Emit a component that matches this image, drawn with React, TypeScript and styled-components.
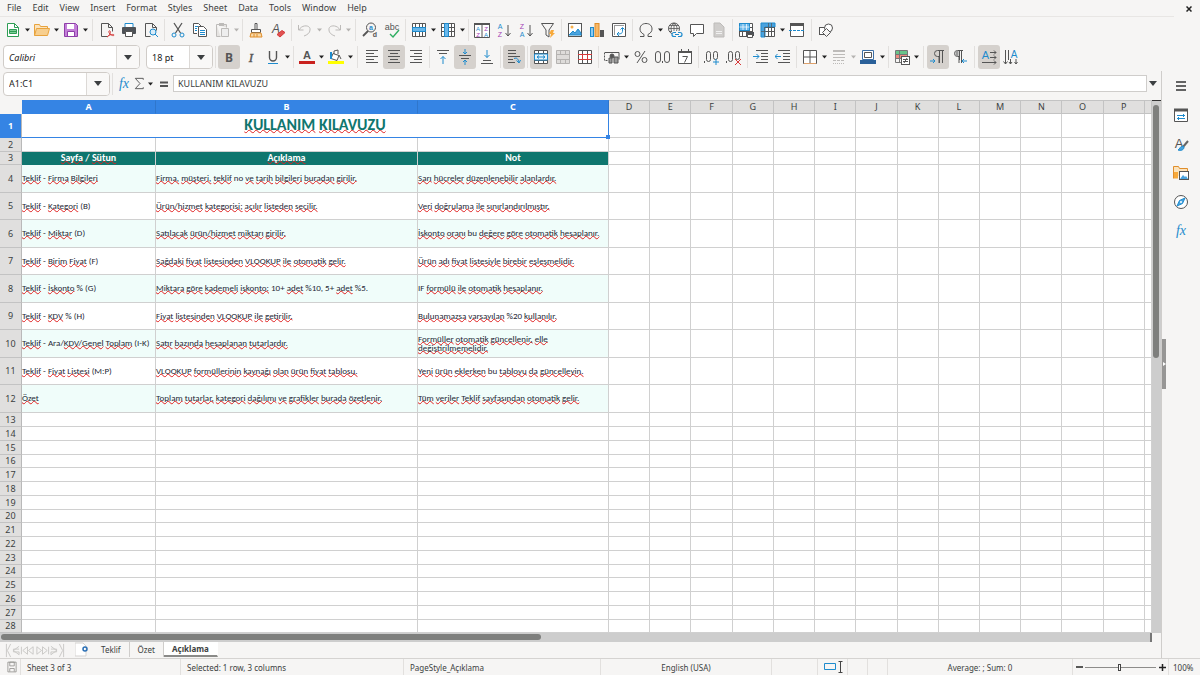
import React from "react";
import styled, { createGlobalStyle, css } from "styled-components";

const ui = `"Noto Sans", "Open Sans", sans-serif`;
const cellFont = `Carlito, Lato, "Noto Sans", sans-serif`;

const c = {
  bg: "#f6f5f4",
  ink: "#3c3f41",
  icon: "#555555",
  dim: "#bdbbb9",
  blue: "#1e8bcd",
  accent: "#3584e4",
  red: "#d63a3a",
  teal: "#0f766e",
  mint: "#f0fdfa",
  grid: "#d0d0d0",
  head: "#e0dfde",
};

const Global = createGlobalStyle`
  * { box-sizing: border-box; }
  body { margin: 0; background: ${c.bg}; color: ${c.ink}; font-family: ${ui}; font-size: 9px; }
  button, input { font: inherit; color: inherit; margin: 0; padding: 0; border: 0; background: none; }
  input:focus, button:focus { outline: none; }
`;

const Page = styled.div`
  min-height: 100vh;
  display: flex;
  flex-direction: column;
`;

const MenuBar = styled.nav`
  display: flex;
  align-items: center;
  height: 17px;
  padding: 0 6px 0 0;
`;
const MenuItems = styled.div`
  display: flex;
  flex: 1;
  height: 17px;
  margin-right: 10px;
  padding-left: 2px;
  border-bottom: 1px solid #e8e6e4;
`;
const MenuItem = styled.button`
  padding: 0 6px 0 5px;
  line-height: 16px;
`;
const CloseButton = styled.button`
  width: 10px;
  height: 16px;
  display: grid;
  place-items: center;
`;

const Toolbar = styled.div`
  display: flex;
  align-items: center;
  height: 27px;
  padding: 0 0 1px 2px;
`;
const Divider = styled.span<{ $wide?: boolean }>`
  width: ${(p) => (p.$wide ? 7 : 5)}px;
  height: 22px;
  flex: none;
  background: linear-gradient(#e2e0de, #e2e0de) center / 1px 100% no-repeat;
`;
const ToolButton = styled.button<{ $on?: boolean }>`
  width: 22px;
  height: 24px;
  flex: none;
  display: grid;
  place-items: center;
  border-radius: 3px;
  ${(p) => p.$on && css`background: #d5d1cd;`}
`;
const CaretButton = styled.button<{ $off?: boolean }>`
  width: 7px;
  height: 24px;
  flex: none;
  display: grid;
  place-items: center;
  color: ${(p) => (p.$off ? "#b5b3b1" : "#222")};
`;

const Combo = styled.label<{ $w: number }>`
  display: flex;
  flex: none;
  width: ${(p) => p.$w}px;
  height: 24px;
  margin-left: 1px;
  background: #fff;
  border: 1px solid #d0ccc8;
  border-radius: 4px;
  overflow: hidden;
`;
const ComboInput = styled.input<{ $italic?: boolean }>`
  flex: 1;
  min-width: 0;
  padding-left: 5px;
  color: #222;
  font-style: ${(p) => (p.$italic ? "italic" : "normal")};
`;
const ComboArrow = styled.button`
  width: 23px;
  display: grid;
  place-items: center;
  background: #f9f8f7;
  border-left: 1px solid #dcd9d6;
`;
const Gap = styled.span`
  width: 5px;
  flex: none;
`;

const Body = styled.div`
  display: flex;
  flex: 1;
`;
const Main = styled.main`
  flex: 1;
  min-width: 0;
  display: flex;
  flex-direction: column;
  border-right: 1px solid #cfcdcb;
`;
const FormulaBar = styled.div`
  display: flex;
  align-items: center;
  height: 29px;
  padding: 0 2px 4px;
`;
const FormulaTool = styled.button<{ $w: number }>`
  width: ${(p) => p.$w}px;
  height: 22px;
  flex: none;
  display: grid;
  place-items: center;
`;
const FormulaInput = styled.input`
  flex: 1;
  min-width: 0;
  height: 17px;
  padding-left: 4px;
  background: #fff;
  border: 1px solid #cfcdcb;
`;

const GridArea = styled.div`
  display: flex;
`;
const Sheet = styled.table`
  flex: 1;
  width: 100%;
  min-width: 0;
  table-layout: fixed;
  border-collapse: separate;
  border-spacing: 0;
  background: #fff;
`;
const Col = styled.col<{ $w?: number }>`
  ${(p) => p.$w && css`width: ${p.$w}px;`}
`;
const Corner = styled.th`
  height: 14px;
  padding: 0;
  background: ${c.bg};
`;
const ColHead = styled.th<{ $on?: boolean }>`
  height: 14px;
  padding: 0;
  line-height: 12px;
  font-size: 9px;
  font-weight: ${(p) => (p.$on ? 700 : 400)};
  color: ${(p) => (p.$on ? "#fff" : "#3c3f41")};
  background: ${(p) => (p.$on ? c.accent : c.head)};
  border-right: 1px solid ${(p) => (p.$on ? "#2f76cc" : "#c3c3c3")};
  border-bottom: 1px solid ${(p) => (p.$on ? c.accent : "#c3c3c3")};
  border-top: 1px solid ${(p) => (p.$on ? c.accent : "#c3c3c3")};
`;
const RowHead = styled.th<{ $h: number; $on?: boolean }>`
  height: ${(p) => p.$h}px;
  padding: 0;
  line-height: 12px;
  font-size: 9px;
  font-weight: ${(p) => (p.$on ? 700 : 400)};
  color: ${(p) => (p.$on ? "#fff" : "#3c3f41")};
  background: ${(p) => (p.$on ? c.accent : c.head)};
  border-right: 1px solid #b9b9b9;
  border-bottom: 1px solid ${(p) => (p.$on ? c.accent : "#c3c3c3")};
`;
const Cell = styled.td<{ $mint?: boolean }>`
  padding: 0 0 2px;
  border-right: 1px solid ${c.grid};
  border-bottom: 1px solid ${c.grid};
  background: ${(p) => (p.$mint ? c.mint : "#fff")};
  font-family: ${cellFont};
  font-size: 9px;
  line-height: 9px;
  color: #1f2937;
  white-space: nowrap;
`;
const TitleCell = styled.td`
  position: relative;
  padding: 0 0 2px;
  text-align: center;
  font-family: ${cellFont};
  font-size: 16px;
  line-height: 20px;
  font-weight: 700;
  color: ${c.teal};
  border-right: 1px solid ${c.accent};
  border-bottom: 1px solid ${c.accent};
`;
const FillHandle = styled.span`
  position: absolute;
  right: -2px;
  bottom: -2px;
  width: 4px;
  height: 4px;
  background: ${c.accent};
`;
const BandCell = styled.td`
  padding: 0 0 1px;
  text-align: center;
  background: ${c.teal};
  color: #fff;
  font-size: 10px;
  line-height: 12px;
  font-weight: 700;
  font-family: ${cellFont};
  border-right: 1px solid ${c.grid};
`;
const Misspelt = styled.span`
  text-decoration: underline wavy #e02020 1px;
  text-decoration-skip-ink: none;
  text-underline-offset: -1px;
`;

const VScroll = styled.div`
  width: 9px;
  flex: none;
  padding: 4px 2px 0 1px;
  background: #cdcdcd;
  border-top: 1px solid #333;
`;
const VThumb = styled.div`
  height: 48%;
  border-radius: 3px;
  background: #7e7f7d;
`;
const HScroll = styled.div`
  height: 9px;
  margin-right: 9px;
  padding: 1px;
  background: #cdcdcd;
  border-right: 2px solid #777;
`;
const HThumb = styled.div`
  width: 47%;
  height: 6px;
  border-radius: 3px;
  background: #7e7f7d;
`;
const Handle = styled.button`
  position: absolute;
  left: 0;
  top: 268px;
  width: 4px;
  height: 50px;
  background: #979695;
  display: grid;
  place-items: center;
`;

const TabBar = styled.div`
  display: flex;
  height: 16px;
  font-size: 8px;
`;
const TabNav = styled.div`
  display: flex;
  align-items: center;
  width: 75px;
  padding-left: 5px;
`;
const NavButton = styled.button`
  width: 15px;
  height: 14px;
  display: grid;
  place-items: center;
`;
const AddSheet = styled.button`
  width: 18px;
  height: 15px;
  display: grid;
  place-items: center start;
`;
const Tab = styled.button<{ $on?: boolean }>`
  height: 15px;
  padding: 0 8px;
  line-height: 14px;
  border-right: 1px solid ${(p) => (p.$on ? "transparent" : "#cfcdcb")};
  ${(p) =>
    p.$on &&
    css`
      font-weight: 700;
      background: #fff;
      border-bottom: 2px solid #8a8a88;
    `}
`;

const Sidebar = styled.aside`
  position: relative;
  width: 38px;
  flex: none;
  display: flex;
  flex-direction: column;
  align-items: center;
`;
const DeckButton = styled.button`
  width: 29px;
  height: 29px;
  display: grid;
  place-items: center;
`;

const StatusBar = styled.footer`
  display: grid;
  grid-template-columns: 21px 160fr 223fr 197fr 171fr 46px 30px 20px 20px 185fr 96px 31px;
  height: 17px;
  border-top: 1px solid #d5d3d1;
  font-size: 8px;
`;
const Status = styled.div<{ $mid?: boolean }>`
  display: flex;
  align-items: center;
  justify-content: ${(p) => (p.$mid ? "center" : "flex-start")};
  padding-left: ${(p) => (p.$mid ? 0 : 6)}px;
  border-right: 1px solid #e2e0de;
  white-space: nowrap;
  &:last-child { border-right: 0; padding-left: 4px; }
`;
const ZoomButton = styled.button`
  width: 12px;
  height: 14px;
  display: grid;
  place-items: center;
`;
const ZoomSlider = styled.input`
  appearance: none;
  flex: 1;
  min-width: 0;
  height: 9px;
  background: linear-gradient(#8d8c8a, #8d8c8a) center / 100% 1px no-repeat;
  &::-webkit-slider-thumb {
    appearance: none;
    width: 3px;
    height: 7px;
    border: 1px solid #444;
    background: #fff;
  }
`;

const A = ({ x, y, s = 7, f = c.icon, w = 400, i, font = `"Liberation Sans", sans-serif`, children }: any) => (
  <text x={x} y={y} fontSize={s} fill={f} stroke="none" fontWeight={w} fontStyle={i ? "italic" : "normal"} textAnchor="middle" fontFamily={font}>
    {children}
  </text>
);
const sheetGrid = "M1.500 1.500h13v13h-13zM1.500 5.500h13M1.500 9.500h13M4.500 1.500v13M8.500 1.500v13M11.500 1.500v13";
const lines = (a: number[][]) => a.map(([x, y, w]) => `M${x} ${y}.5h${w}`).join("");

const icons: Record<string, React.ReactNode> = {
  new: <><path d="M2.500 1.500h7l4 4v9h-11z" fill="#fff" stroke="#2f9e55" /><path d="M9.500 1.500v4h4" stroke="#2f9e55" /><path d="M4.500 7.500h7v4h-7zM4.500 9.500h7" stroke="#2f9e55" fill="#7fd19a" /></>,
  open: <><path d="M.500 13.500v-11h5l1 2h7v2" fill="#fbe3bd" stroke="#e8a33d" /><path d="M.500 13.500l2-7h13l-2 7z" fill="#f7cf8f" stroke="#e8a33d" /></>,
  save: <><path d="M1.500 1.500h11l2 2v11h-13z" fill="#c37fd8" stroke="#8e3ea8" /><path d="M4 2h7v5H4z" fill="#fff" stroke="none" /><path d="M4.500 14v-4.500h7V14" fill="#fff" stroke="#8e3ea8" /></>,
  pdf: <><path d="M8.500 14.500h-6v-13h7l4 4v4M9.500 1.500v4h4" /><path d="M8 15c3-2 4-5 3-6s-2 1 0 3 4 2 4 1-4-1-7 2z" stroke={c.red} /></>,
  print: <><path d="M4 1.500h8v4H4z" fill="#fff" stroke={c.blue} /><rect x="1" y="5" width="14" height="7" rx="1" fill="#4d5156" stroke="none" /><path d="M4.500 9.500h7v5h-7z" fill="#fff" /></>,
  preview: <><path d="M7.500 14.500h-5v-13h7l4 4v3M9.500 1.500v4h4" /><circle cx="10" cy="10" r="3" stroke={c.blue} fill="#d7ecf9" /><path d="M12 12l3 3" stroke={c.blue} /></>,
  cut: <><path d="M4 1l6.500 10M12 1L5.500 11" strokeWidth="1.300" /><circle cx="4" cy="13" r="2" stroke={c.blue} /><circle cx="12" cy="13" r="2" stroke={c.blue} /></>,
  copy: <><path d="M5 11.500H1.500v-10h5l3 3" fill="#fff" /><path d="M3 4.500h3M3 6.500h2M3 8.500h2" stroke={c.blue} /><path d="M6.500 4.500h5l3 3v7h-8z" fill="#fff" /><path d="M8 8.500h5M8 10.500h5M8 12.500h5" stroke={c.blue} /></>,
  paste: <><path d="M2.500 2.500h10v3M2.500 2.500v12h4" stroke={c.dim} fill="#e5e3e1" /><path d="M5 1h5v3H5z" fill={c.dim} stroke="none" /><path d="M7.500 6.500h7v8h-7z" fill="#eee" stroke={c.dim} /></>,
  clone: <><path d="M7 1.500h2v6H7z" fill="#fff" /><path d="M3.500 7.500h9v3h-9z" fill="#fff" /><path d="M3 11h10l1 4H2z" fill="#f9d9a8" stroke="#e08e2b" /><path d="M6 12v3M9 12v3" stroke="#e08e2b" /></>,
  clear: <><A x={6} y={11} s={12} i>A</A><path d="M7 12.500l5-4 3 2-5 4.500z" fill="#e05252" stroke={c.red} /></>,
  undo: <path d="M2 8C5 2 14 3 13 8c0 3-3 5-6 6M1.500 3v5h5" stroke={c.dim} />,
  redo: <path d="M14 8C11 2 2 3 3 8c0 3 3 5 6 6M14.500 3v5h-5" stroke={c.dim} />,
  find: <><circle cx="9" cy="5.500" r="4.500" /><path d="M6 9l-5 5" strokeWidth="1.800" /><A x={9} y={7.500} s={7} f={c.blue} w={700}>a</A><A x={13} y={15} s={7} w={700}>d</A></>,
  spell: <><A x={8} y={8} s={9}>abc</A><path d="M6 12l3 3 6-7" stroke="#2fae62" strokeWidth="1.400" /></>,
  row: <><path d={sheetGrid} fill="#fff" /><path d="M1.500 5.500h13v4h-13z" fill="#69b7ea" stroke={c.blue} /></>,
  col: <><path d={sheetGrid} fill="#fff" /><path d="M4.500 1.500h4v13h-4z" fill="#69b7ea" stroke={c.blue} /></>,
  sort: <><path d="M.500 1.500h15v14H.5zM8 2v13" fill="#fff" /><path d="M0 2h16" strokeWidth="2" /><A x={4} y={8.500} s={6} f={c.blue}>A</A><A x={4} y={15} s={6} f="#a33fb5">Z</A><A x={12} y={8.500} s={6} f="#a33fb5">Z</A><A x={12} y={15} s={6} f={c.blue}>A</A></>,
  asc: <><A x={4} y={6.500} s={7} f={c.blue}>A</A><A x={4} y={14.500} s={7} f="#a33fb5">Z</A><path d="M12 3v11M9.500 11l2.500 3 2.500-3" /></>,
  desc: <><A x={4} y={6.500} s={7} f="#a33fb5">Z</A><A x={4} y={14.500} s={7} f={c.blue}>A</A><path d="M12 3v11M9.500 11l2.500 3 2.500-3" /></>,
  filter: <><path d="M1.500 1.500h12L9 8v7l-3-2V8z" /><path d="M11 8h3l-1 3h2l-5 5 1-4H9z" fill="#f7a93b" stroke="none" /></>,
  image: <><rect x="1.500" y="1.500" width="13" height="13" fill="#fff" /><circle cx="5" cy="5" r="1.500" fill="#f7b04a" stroke="none" /><path d="M2 13l4-4 2 2 3-4 3 4v2z" fill="#4aa3df" stroke={c.blue} /></>,
  chart: <><rect x="1.500" y="5.500" width="3" height="9" fill="#8ccaf0" stroke={c.blue} /><rect x="6" y="1.500" width="4" height="13" fill="#f7b867" stroke="#e08e2b" /><rect x="11.500" y="8.500" width="3" height="6" fill="#555" /></>,
  pivot: <><path d="M1.500 1.500h13v13h-13z" fill="#fff" /><path d="M3 3.500h10M3.500 3v10" stroke="#999" /><path d="M11.500 6v3c0 2-1 3-5 3M9.500 7.500l2-2 2 2M8 10l-2 2 2 2" stroke={c.blue} /></>,
  omega: <path d="M2 14.500h4v-2C3 11 2 9 2 7c0-3 2-5.500 6-5.500S14 4 14 7c0 2-1 4-4 5.500v2h4" />,
  link: <><circle cx="7" cy="6.500" r="5.500" /><path d="M1.500 6.500h11M7 1v11M3 3.500h8M3 9.500h8M7 1c-4 3-4 8 0 11M7 1c4 3 4 8 0 11" strokeWidth=".8" /><path d="M5 9h11v7H5z" fill={c.bg} stroke="none" /><path d="M9 10.500H7a2 2 0 000 4h2M11 10.500h2a2 2 0 010 4h-2M8 12.500h4" stroke={c.blue} strokeWidth="1.200" /></>,
  comment: <path d="M1.500 2.500h13v9h-7l-3 3v-3h-3z" fill="#fff" />,
  header: <><path d="M3 1h6l4 4v10H3z" fill="#cfcdcb" stroke="#bdbbb9" /><path d="M5 11.500h6M5 9.500h6" stroke="#f0f0f0" /></>,
  area: <><path d={sheetGrid} fill="#fff" /><path d="M1.500 1.500h10v7h-10z" fill="#69b7ea" stroke={c.blue} /><path d="M1.500 5h10M5 2v6M8.500 2v6" stroke="#fff" strokeWidth=".7" /><rect x="8" y="10" width="8" height="4" fill="#4d5156" stroke="none" /><path d="M9.500 12.500h5v3h-5z" fill="#fff" /></>,
  freeze: <><path d={sheetGrid} fill="#fff" /><path d="M1 1h14v4H5v10H1z" fill="#4aa3df" stroke={c.blue} /><path d="M4.500 5v10M5 5.500h10M8.500 1v4M11.500 1v4M1 9.500h4" strokeWidth=".7" /></>,
  split: <><path d="M1.500 2.500h13v12h-13z" fill="#fff" /><path d="M1 2.500h14" strokeWidth="3" /><path d="M0 8.500h16" stroke={c.blue} strokeDasharray="3 1" /></>,
  shapes: <><rect x="1.500" y="5.500" width="6" height="7" fill="#fff" /><circle cx="10.500" cy="6" r="4" fill="#fff" /><path d="M8.500 6.500l4 4-4 4-4-4z" fill={c.bg} /></>,
  bold: <A x={8} y={12.500} s={12} w={700} font={ui}>B</A>,
  italic: <text x="8" y="12.500" fontSize="13" fontFamily="Liberation Serif, serif" fontStyle="italic" textAnchor="middle" fill={c.icon} stroke={c.icon} strokeWidth=".4">I</text>,
  underline: <><path d="M4.500 2v6.500a3.500 3.500 0 007 0V2" strokeWidth="1.400" /><path d="M3 14.500h10" stroke={c.blue} /></>,
  color: <><A x={8} y={10} s={11} w={700}>A</A><path d="M0 13.500h16" stroke="#c9211e" strokeWidth="3" /></>,
  fill: <><path d="M5 4.500l6 2-2 5-6-2zM6 5V2l4-1v4" fill="#fff" /><path d="M3 3v7" stroke={c.blue} strokeWidth="2" /><path d="M11 6l2 4" /><path d="M0 13.500h16" stroke="#ff0" strokeWidth="3" /></>,
  left: <path d={lines([[2, 1, 12], [2, 4, 8], [2, 7, 12], [2, 10, 8], [2, 13, 12]])} />,
  center: <path d={lines([[2, 1, 12], [4, 4, 8], [2, 7, 12], [4, 10, 8], [2, 13, 12]])} />,
  right: <path d={lines([[2, 1, 12], [6, 4, 8], [2, 7, 12], [6, 10, 8], [2, 13, 12]])} />,
  top: <><path d="M2 1.500h12M4 4.500h8" /><path d="M8 15V7.500M5.500 10L8 7.500l2.500 2.500" stroke={c.blue} /></>,
  middle: <><path d="M2 6.500h12M4 9.500h8" /><path d="M8 0v5M6 3l2 2 2-2M8 16v-5M6 13l2-2 2 2" stroke={c.blue} /></>,
  bottom: <><path d="M4 11.500h8M2 14.500h12" /><path d="M8 1v7.500M5.500 6L8 8.500 10.500 6" stroke={c.blue} /></>,
  wrap: <><path d="M2 1.500h8M2 4.500h8M2 7.500h12M2 10.500h5M2 13.500h7" /><path d="M8 9.500c3-1 4 0 5 4M10.500 11.500l2.500 2.500 1.500-3" stroke={c.blue} /></>,
  merge: <><path d="M1.500 1.500h13v13h-13zM1.500 4.500h13M1.500 11.500h13M5.500 1.500v3M10.500 1.500v3M5.500 11.500v3M10.500 11.500v3" fill="#fff" /><path d="M1.500 5h13v6h-13z" fill="#e6f3fb" stroke={c.blue} /><path d="M4 8h8M6 6.500L4 8l2 1.500M10 6.500L12 8l-2 1.500" stroke={c.blue} /></>,
  mergeOff: <path d="M1.500 1.500h13v13h-13zM1.500 5.500h13M1.500 10.500h13M5.500 1.500v4M10.500 1.500v4M5.500 10.500v4M10.500 10.500v4" fill="#dedcda" stroke="#b5b3b1" />,
  unmerge: <><path d="M1.500 1.500h13v13h-13zM5.500 1.500v13M10.500 1.500v13" fill="#fff" /><path d="M1 5.500h14M1 10.500h14M5.500 5v6M10.500 5v6" stroke={c.red} /></>,
  currency: <><path d="M1 3.500h14v7" /><path d="M.500 3.500v8h4" strokeDasharray="2 1" /><circle cx="8" cy="7" r="2" fill={c.icon} /><path d="M5 14V9h3v5zM10 14V8h4v6z" fill="#999" /></>,
  percent: <><circle cx="4.500" cy="5" r="2.500" /><circle cx="11.500" cy="11" r="2.500" /><path d="M12 2L4 14" /></>,
  number: <><rect x=".5" y="2.500" width="5" height="11" rx="2.500" /><rect x="9.500" y="2.500" width="5" height="11" rx="2.500" /><path d="M7.500 12v2" /></>,
  date: <><path d="M1.500 2.500h13v12h-13z" fill="#fff" /><path d="M1 3h14" strokeWidth="2" /><path d="M4.500 0v3M11.500 0v3M5.500 7.500h5l-3 6" /></>,
  addDec: <><path d="M.500 12v2" /><rect x="2.500" y="2.500" width="4" height="10" rx="2" /><rect x="9.500" y="2.500" width="4" height="8" rx="2" /><path d="M12 10v6M9 13h6" stroke={c.blue} /></>,
  delDec: <><path d="M.500 12v2" /><rect x="2.500" y="2.500" width="4" height="10" rx="2" /><rect x="9.500" y="2.500" width="4" height="8" rx="2" /><path d="M9 10l6 6M15 10l-6 6" stroke={c.red} /></>,
  indent: <><path d="M3 1.500h12M8 4.500h7M8 7.500h7M8 10.500h7M3 13.500h12" /><path d="M0 7.500h6M3.500 5L6 7.500 3.500 10" stroke={c.blue} /></>,
  outdent: <><path d="M3 1.500h12M8 4.500h7M8 7.500h7M8 10.500h7M3 13.500h12" /><path d="M0 7.500h6M2.500 5L0 7.500 2.500 10" stroke={c.blue} /></>,
  borders: <><path d="M1.500 1.500h13v13h-13zM8 2v12M2 8h12" fill="#fff" /><path d="M2 14.500h12" stroke="#dfa16a" /></>,
  style: <><path d="M2 2h12" strokeWidth="2" stroke={c.dim} /><path d="M2 5.500h12M2 8.500h12" stroke={c.dim} /><path d="M2 11.500h12" stroke={c.dim} strokeDasharray="3 1" /><path d="M2 14.500h12" stroke={c.dim} strokeDasharray="1 1" /></>,
  borderColor: <><path d="M2.500 1.500h11v9h-11z" fill="#fff" stroke="#3b6ea5" /><path d="M4.500 3.500h7v5h-7z" /><path d="M0 13h16" stroke="#2a6099" strokeWidth="4" /></>,
  cond: <><path d="M1 2h13v4H1z" fill="#69c58a" stroke="none" /><path d="M1 6h13v4H1z" fill="#ee8a80" stroke="none" /><path d="M1.500 1.500h12v12h-12zM1.500 5.500h12M1.500 9.500h12M5.500 1.500v12" stroke="#777" /><rect x="7.500" y="7.500" width="8" height="8" fill="#fff" /><path d="M9 10.500h5M9 12.500h5M13 9l-3 5" /></>,
  ltr: <><path d="M14 1.500H7.500a3 3 0 000 6H9V14M9.500 2v12M12.500 2v12" /><path d="M0 12h5M3 10l2 2-2 2" stroke={c.blue} /></>,
  rtl: <><path d="M11 1.500H5.500a3 3 0 000 6H7V14M7.500 2v9M9.500 2v12" /><path d="M3.500 2h3v5h-3z" fill="#999" stroke="none" /><path d="M10 12h5M12 10l-2 2 2 2" stroke={c.blue} /></>,
  textH: <><A x={4.500} y={10} s={11} f={c.blue}>A</A><path d="M9 3.500h6M13 1.500l2 2-2 2M9 8.500h6M13 6.500l2 2-2 2M1 13.500h14M13 11.500l2 2-2 2" /></>,
  textV: <><path d="M2.500 1v14M.5 12.500l2 2.500 2-2.500M7.500 10v5M6 13l1.500 2L9 13M13 10v5M11.500 13l1.500 2 1.500-2M5.500 1v10" /><A x={11} y={9} s={10} f={c.blue}>A</A></>,
  fx: <text x="8" y="12" fontSize="14" fontFamily="Liberation Serif, serif" fontStyle="italic" textAnchor="middle" fill={c.blue} stroke="none">fx</text>,
  sigma: <path d="M12 4V2.500H3.500L8.500 8l-5 5.500H12V12" />,
  equals: <path d="M4 6.500h8M4 10h8" strokeWidth="1.800" />,
  menu: <path d="M3 4h10M3 8h10M3 12h10" strokeWidth="1.600" stroke="#333" />,
  props: <><path d="M1.500 2.500h13v12h-13z" fill="#fff" /><path d="M1 3h14" strokeWidth="3" /><path d="M4 8.500h8M4 11.500h8" stroke={c.blue} /><path d="M10.500 7v3M5.500 10v3" stroke={c.blue} /></>,
  styles: <><A x={6} y={12} s={13}>A</A><path d="M15 5l-5 6" stroke="#666" strokeWidth="2" /><path d="M10 10c-3 0-3 3-5 4 3 1 6 0 6-3z" fill="#4aa3df" stroke={c.blue} /></>,
  gallery: <><path d="M.500 13.500v-12h5l1 2h8v3" fill="#fbe3bd" stroke="#e08e2b" /><path d="M1 13.500V7h4v6.500z" fill="#f7a93b" stroke="none" /><rect x="6.500" y="6.500" width="9" height="8" fill="#fff" /><path d="M7 14l3-4 2 2 1-1 2 3z" fill="#4aa3df" stroke="none" /></>,
  compass: <><circle cx="8" cy="8" r="6.500" fill="#fff" /><path d="M12 4l-2.500 5.500L4 12l2.500-5.500z" fill="#4aa3df" stroke={c.blue} /><circle cx="8" cy="8" r="1" fill="#fff" stroke="none" /></>,
  doc: <path d="M2.500 1.500h11v13h-11zM5 1.500h6v5H5zM5 14v-4h6v4" stroke="#8a8886" />,
  first: <path d="M1.500 1v14M15 3.500L9 8l6 4.500v-3H9v-3h6M6 1L2.500 8 6 15" stroke="#c9c7c5" />,
  prev: <path d="M1.500 4v8M8 4L3 8l5 4zM14 4L9 8l5 4z" stroke="#c9c7c5" />,
  next: <path d="M2 4l5 4-5 4zM8 4l5 4-5 4zM14.500 4v8" stroke="#c9c7c5" />,
  last: <path d="M14.500 1v14M1 3.500L7 8l-6 4.500v-3h6v-3H1M10 1l3.500 7-3.500 7" stroke="#c9c7c5" />,
};

const Icon = ({ name, size = 16 }: { name: string; size?: number }) => (
  <svg width={size} height={size} viewBox="0 0 16 16" fill="none" stroke={c.icon} aria-hidden="true">
    {icons[name]}
  </svg>
);
const Caret = ({ big }: { big?: boolean }) => (
  <svg width={big ? 8 : 5} height={big ? 5 : 4} viewBox="0 0 8 5" fill="currentColor" aria-hidden="true">
    <path d="M0 0h8L4 5z" />
  </svg>
);

type Tool = { id: string; label: string; menu?: boolean; on?: boolean; off?: boolean };
const t = (id: string, label: string, flags = ""): Tool => ({
  id,
  label,
  menu: flags.includes("m"),
  on: flags.includes("o"),
  off: flags.includes("x"),
});

const standard: (Tool | "|" | "||")[] = [
  t("new", "New", "m"), t("open", "Open", "m"), t("save", "Save", "m"), "||",
  t("pdf", "Export as PDF"), t("print", "Print"), t("preview", "Print Preview"), "|",
  t("cut", "Cut"), t("copy", "Copy"), t("paste", "Paste", "mx"), "|",
  t("clone", "Clone Formatting"), t("clear", "Clear Formatting"), "|",
  t("undo", "Undo", "mx"), t("redo", "Redo", "mx"), "||",
  t("find", "Find and Replace"), t("spell", "Spelling"), "|",
  t("row", "Row", "m"), t("col", "Column", "m"), "|",
  t("sort", "Sort"), t("asc", "Sort Ascending"), t("desc", "Sort Descending"), t("filter", "AutoFilter"), "|",
  t("image", "Image"), t("chart", "Chart"), t("pivot", "Pivot Table"), "|",
  t("omega", "Special Character", "m"), t("link", "Hyperlink"), t("comment", "Comment"), t("header", "Headers and Footers"), "|",
  t("area", "Print Area"), t("freeze", "Freeze Rows and Columns", "m"), t("split", "Split Window"), "||",
  t("shapes", "Draw Functions"),
];
const formatting: (Tool | "|" | "||")[] = [
  t("bold", "Bold", "o"), t("italic", "Italic"), t("underline", "Underline", "m"), "|",
  t("color", "Font Color", "m"), t("fill", "Background Color", "m"), "||",
  t("left", "Align Left"), t("center", "Center Horizontally", "o"), t("right", "Align Right"), "|",
  t("top", "Align Top"), t("middle", "Center Vertically", "o"), t("bottom", "Align Bottom"), "|",
  t("wrap", "Wrap Text", "o"), "|",
  t("merge", "Merge and Center", "o"), t("mergeOff", "Merge Cells"), t("unmerge", "Unmerge Cells"), "|",
  t("currency", "Currency", "m"), t("percent", "Percent"), t("number", "Number"), t("date", "Date"), "|",
  t("addDec", "Add Decimal Place"), t("delDec", "Delete Decimal Place"), "|",
  t("indent", "Increase Indent"), t("outdent", "Decrease Indent"), "|",
  t("borders", "Borders", "m"), t("style", "Border Style", "mx"), t("borderColor", "Border Color", "m"), "|",
  t("cond", "Conditional Formatting", "m"), "||",
  t("ltr", "Left-To-Right", "o"), t("rtl", "Right-To-Left"), "||",
  t("textH", "Text Left to Right", "o"), t("textV", "Text Top to Bottom"),
];

const Tools = ({ items }: { items: (Tool | "|" | "||")[] }) => (
  <>
    {items.map((it, i) =>
      typeof it === "string" ? (
        <Divider key={i} $wide={it === "||"} />
      ) : (
        <React.Fragment key={it.id}>
          <ToolButton $on={it.on} aria-label={it.label}>
            <Icon name={it.id} />
          </ToolButton>
          {it.menu && (
            <CaretButton $off={it.off} aria-label={`${it.label} options`}>
              <Caret />
            </CaretButton>
          )}
        </React.Fragment>
      )
    )}
  </>
);

const plain = /^(-|no|bu|IF|%|\/|[(%\d].*)$/;
const Words = ({ text }: { text: string }) => (
  <>
    {text.split(/( |\n|Ara\/)/).map((w, i) => {
      if (w === "\n") return <br key={i} />;
      if (w === "" || w === " " || w === "Ara/" || plain.test(w)) return w;
      return <Misspelt key={i}>{w}</Misspelt>;
    })}
  </>
);

const data: [string, string, string][] = [
  ["Teklif - Firma Bilgileri", "Firma, müşteri, teklif no ve tarih bilgileri buradan girilir.", "Sarı hücreler düzenlenebilir alanlardır."],
  ["Teklif - Kategori (B)", "Ürün/hizmet kategorisi; açılır listeden seçilir.", "Veri doğrulama ile sınırlandırılmıştır."],
  ["Teklif - Miktar (D)", "Satılacak ürün/hizmet miktarı girilir.", "İskonto oranı bu değere göre otomatik hesaplanır."],
  ["Teklif - Birim Fiyat (F)", "Sağdaki fiyat listesinden VLOOKUP ile otomatik gelir.", "Ürün adı fiyat listesiyle birebir eşleşmelidir."],
  ["Teklif - İskonto % (G)", "Miktara göre kademeli iskonto: 10+ adet %10, 5+ adet %5.", "IF formülü ile otomatik hesaplanır."],
  ["Teklif - KDV % (H)", "Fiyat listesinden VLOOKUP ile getirilir.", "Bulunamazsa varsayılan %20 kullanılır."],
  ["Teklif - Ara/KDV/Genel Toplam (I-K)", "Satır bazında hesaplanan tutarlardır.", "Formüller otomatik güncellenir, elle\ndeğiştirilmemelidir."],
  ["Teklif - Fiyat Listesi (M:P)", "VLOOKUP formüllerinin kaynağı olan ürün fiyat tablosu.", "Yeni ürün eklerken bu tabloyu da güncelleyin."],
  ["Özet", "Toplam tutarlar, kategori dağılımı ve grafikler burada özetlenir.", "Tüm veriler Teklif sayfasından otomatik gelir."],
];
const letters = "ABCDEFGHIJKLMNOP".split("");
const Blanks = ({ n }: { n: number }) => (
  <>
    {Array.from({ length: n }, (_, i) => (
      <Cell key={i} />
    ))}
  </>
);

export default function App() {
  return (
    <Page>
      <Global />
      <MenuBar>
        <MenuItems>
          {["File", "Edit", "View", "Insert", "Format", "Styles", "Sheet", "Data", "Tools", "Window", "Help"].map((m) => (
            <MenuItem key={m}>{m}</MenuItem>
          ))}
        </MenuItems>
        <CloseButton aria-label="Close document">
          <svg width="6" height="6" viewBox="0 0 6 6" stroke="#222" strokeWidth="1.500"><path d="M.5.5l5 5M5.500.5l-5 5" /></svg>
        </CloseButton>
      </MenuBar>
      <Toolbar><Tools items={standard} /></Toolbar>
      <Toolbar>
        <Combo $w={137}>
          <ComboInput $italic aria-label="Font name" defaultValue="Calibri" />
          <ComboArrow aria-label="Font list"><Caret big /></ComboArrow>
        </Combo>
        <Gap />
        <Combo $w={67}>
          <ComboInput aria-label="Font size" defaultValue="18 pt" />
          <ComboArrow aria-label="Size list"><Caret big /></ComboArrow>
        </Combo>
        <Divider />
        <Tools items={formatting} />
      </Toolbar>
      <Body>
        <Main>
          <FormulaBar>
            <Combo $w={107}>
              <ComboInput aria-label="Name box" defaultValue="A1:C1" />
              <ComboArrow aria-label="Names"><Caret big /></ComboArrow>
            </Combo>
            <Divider />
            <FormulaTool $w={17} aria-label="Function wizard"><Icon name="fx" /></FormulaTool>
            <FormulaTool $w={15} aria-label="Select function"><Icon name="sigma" size={15} /></FormulaTool>
            <CaretButton aria-label="Function options"><Caret /></CaretButton>
            <FormulaTool $w={19} aria-label="Formula"><Icon name="equals" /></FormulaTool>
            <FormulaInput aria-label="Input line" defaultValue="KULLANIM KILAVUZU" />
            <FormulaTool $w={12} aria-label="Expand formula bar"><Caret big /></FormulaTool>
          </FormulaBar>
          <GridArea>
            <Sheet>
              <colgroup>
                <Col $w={22} /><Col $w={134} /><Col $w={262} /><Col $w={191} />
                {letters.slice(3).map((l) => <Col key={l} />)}
                <Col $w={7} />
              </colgroup>
              <thead>
                <tr>
                  <Corner />
                  {letters.map((l, i) => <ColHead key={l} $on={i < 3}>{l}</ColHead>)}
                  <ColHead />
                </tr>
              </thead>
              <tbody>
                <tr>
                  <RowHead $h={24} $on>1</RowHead>
                  <TitleCell colSpan={3}><Words text="KULLANIM KILAVUZU" /><FillHandle /></TitleCell>
                  <Blanks n={14} />
                </tr>
                <tr><RowHead $h={14}>2</RowHead><Blanks n={17} /></tr>
                <tr>
                  <RowHead $h={13}>3</RowHead>
                  <BandCell><Words text="Sayfa / Sütun" /></BandCell>
                  <BandCell><Words text="Açıklama" /></BandCell>
                  <BandCell>Not</BandCell>
                  <Blanks n={14} />
                </tr>
                {data.map((r, i) => (
                  <tr key={i}>
                    <RowHead $h={i % 2 ? 27 : 28}>{i + 4}</RowHead>
                    {r.map((v, j) => <Cell key={j} $mint={i % 2 === 0}><Words text={v} /></Cell>)}
                    <Blanks n={14} />
                  </tr>
                ))}
                {Array.from({ length: 16 }, (_, i) => (
                  <tr key={i}><RowHead $h={i % 4 === 3 ? 13 : 14}>{i + 13}</RowHead><Blanks n={17} /></tr>
                ))}
              </tbody>
            </Sheet>
            <VScroll><VThumb /></VScroll>
          </GridArea>
          <HScroll><HThumb /></HScroll>
          <TabBar>
            <TabNav>
              {["first", "prev", "next", "last"].map((n) => (
                <NavButton key={n} aria-label={`${n} sheet`}><Icon name={n} size={15} /></NavButton>
              ))}
            </TabNav>
            <AddSheet aria-label="Add sheet">
              <svg width="13" height="15" viewBox="0 0 13 15"><path d="M0 1h8l3 3v10H0z" fill="#fff" stroke="#d5d3d1" /><circle cx="10" cy="7" r="2" fill="none" stroke="#2a6fb5" strokeWidth="1.500" /></svg>
            </AddSheet>
            <Tab>Teklif</Tab>
            <Tab>Özet</Tab>
            <Tab $on>Açıklama</Tab>
          </TabBar>
        </Main>
        <Sidebar>
          {[["menu", "Sidebar settings"], ["props", "Properties"], ["styles", "Styles"], ["gallery", "Gallery"], ["compass", "Navigator"], ["fx", "Functions"]].map(([n, l]) => (
            <DeckButton key={n} aria-label={l}><Icon name={n} /></DeckButton>
          ))}
          <Handle aria-label="Hide sidebar">
            <svg width="3" height="4" viewBox="0 0 3 4"><path d="M0 0l3 2-3 2z" fill="#fff" /></svg>
          </Handle>
        </Sidebar>
      </Body>
      <StatusBar>
        <Status><Icon name="doc" size={12} /></Status>
        <Status>Sheet 3 of 3</Status>
        <Status>Selected: 1 row, 3 columns</Status>
        <Status>PageStyle_Açıklama</Status>
        <Status $mid>English (USA)</Status>
        <Status />
        <Status>
          <svg width="22" height="12" viewBox="0 0 22 12" fill="none"><path d="M.5 2.500h11v6H.5z" stroke={c.blue} /><path d="M14.500.5h4M16.500.5v11M14.500 11.500h4" stroke="#444" /></svg>
        </Status>
        <Status />
        <Status />
        <Status $mid>Average: ; Sum: 0</Status>
        <Status $mid>
          <ZoomButton aria-label="Zoom out"><svg width="7" height="2"><path d="M0 1h7" stroke="#222" strokeWidth="1.500" /></svg></ZoomButton>
          <ZoomSlider type="range" aria-label="Zoom" min={0} max={200} defaultValue={97} />
          <ZoomButton aria-label="Zoom in"><svg width="7" height="7"><path d="M0 3.500h7M3.500 0v7" stroke="#222" strokeWidth="1.500" /></svg></ZoomButton>
        </Status>
        <Status>100%</Status>
      </StatusBar>
    </Page>
  );
}
